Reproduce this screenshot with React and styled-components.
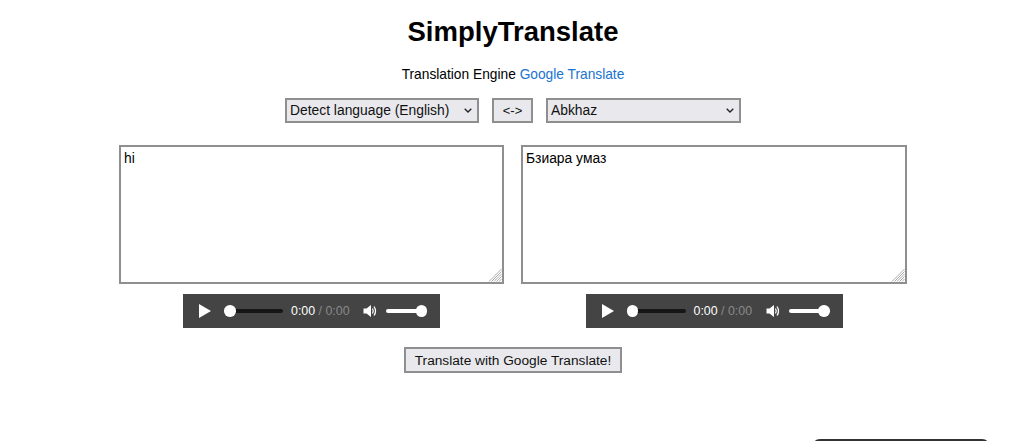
import React from 'react';
import styled, { createGlobalStyle } from 'styled-components';

const chevron =
  "data:image/svg+xml,%3Csvg xmlns='http://www.w3.org/2000/svg' width='8' height='5'%3E%3Cpath d='M.7.7 4 4l3.3-3.3' fill='none' stroke='%23222' stroke-width='1.3'/%3E%3C/svg%3E";

const GlobalStyle = createGlobalStyle`
  html, body {
    margin: 0;
    padding: 0;
    background: #fff;
    overflow: hidden;
  }
  body {
    font-family: "Liberation Sans", Arial, sans-serif;
    font-size: 13.7px;
    color: #000;
  }
`;

const Page = styled.main`
  height: 441px;
  display: flex;
  flex-direction: column;
  align-items: center;
  padding: 15px 0 0 2px;
  box-sizing: border-box;
`;

const Title = styled.h1`
  margin: 0;
  font-size: 27.5px;
  line-height: 33px;
  font-weight: 700;
`;

const EngineLine = styled.p`
  margin: 19px 0 0;
  font-size: 13.75px;
  line-height: 16px;

  a {
    color: #1a73d0;
    text-decoration: none;
  }
`;

const LanguageRow = styled.div`
  margin-top: 15px;
  display: flex;
  align-items: center;
  gap: 13px;
`;

const control = `
  box-sizing: border-box;
  height: 25px;
  background-color: #e9e9ed;
  border: 2px solid #8f8f8f;
  border-radius: 0;
  color: #111;
  font-family: "Liberation Sans", Arial, sans-serif;
  font-size: 13.7px;
`;

const LanguageSelect = styled.select`
  ${control}
  width: ${(p) => p.$width}px;
  padding: 0 0 1px 3px;
  font-size: 13.85px;
  appearance: none;
  background-image: url("${chevron}");
  background-repeat: no-repeat;
  background-position: right 5px center;
`;

const SwapButton = styled.button`
  ${control}
  width: 41px;
  padding: 0;
  font-size: 13px;
`;

const Panels = styled.div`
  margin-top: 22px;
  display: grid;
  grid-template-columns: 385px 386px;
  column-gap: 17px;
`;

const Panel = styled.div`
  display: flex;
  flex-direction: column;
  align-items: center;
  gap: 10px;
`;

const BoxWrap = styled.div`
  position: relative;
  width: 100%;
  height: 139px;
`;

const TextBox = styled.textarea`
  display: block;
  box-sizing: border-box;
  width: 100%;
  height: 100%;
  margin: 0;
  padding: 3px;
  border: 2px solid #8f8f8f;
  border-radius: 0;
  background: #fff;
  color: #000;
  font-family: "Liberation Sans", Arial, sans-serif;
  font-size: 13.85px;
  line-height: 16px;
  outline: none;
  resize: none;
`;

const Grip = styled.svg`
  position: absolute;
  right: 2px;
  bottom: 2px;
  width: 14px;
  height: 14px;
  stroke: #a0a0a0;
  stroke-width: 0.9;
  fill: none;
`;

const Player = styled.div`
  box-sizing: border-box;
  width: 257px;
  height: 34px;
  background: #444;
  display: flex;
  align-items: center;
  padding-left: 16px;
  color: #fff;
  font-size: 12.4px;
`;

const PlayIcon = styled.svg`
  width: 12px;
  height: 14px;
  fill: #fff;
  flex: none;
`;

const Track = styled.div`
  position: relative;
  height: 4px;
  width: ${(p) => p.$width}px;
  margin-left: ${(p) => p.$gap}px;
  border-radius: 2px;
  background: ${(p) => p.$color};
  flex: none;
`;

const Knob = styled.span`
  position: absolute;
  top: -4px;
  ${(p) => (p.$end ? 'right: -5px;' : 'left: -3px;')}
  width: 11.5px;
  height: 11.5px;
  border-radius: 50%;
  background: #fff;
`;

const Time = styled.span`
  margin-left: 8px;
  white-space: nowrap;
  flex: none;
  width: 62px;
`;

const Muted = styled.span`
  color: #8a8a8a;
`;

const VolumeIcon = styled.svg`
  width: 15px;
  height: 14px;
  margin-left: 10px;
  fill: #fff;
  stroke: #fff;
  flex: none;
`;

const TranslateButton = styled.button`
  ${control}
  margin-top: 19px;
  width: 218px;
  height: 26px;
  padding: 0;
`;

const CornerBar = styled.div`
  position: absolute;
  left: 812px;
  top: 439px;
  width: 178px;
  height: 20px;
  border-radius: 8px 8px 0 0;
  background: #333;
`;

function AudioPlayer() {
  return (
    <Player>
      <PlayIcon viewBox="0 0 12 14">
        <path d="M0 0 L12 7 L0 14 Z" />
      </PlayIcon>
      <Track $width={56} $gap={16} $color="#161616">
        <Knob />
      </Track>
      <Time>
        0:00 <Muted>/ 0:00</Muted>
      </Time>
      <VolumeIcon viewBox="0 0 15 14">
        <path d="M0.5 4.5 H3.5 L8 1 V13 L3.5 9.5 H0.5 Z" stroke="none" />
        <path d="M9.5 4.5 Q11 7 9.5 9.5 M11 2.5 Q14 7 11 11.5" fill="none" strokeWidth="1.3" />
      </VolumeIcon>
      <Track $width={36} $gap={8} $color="#fff">
        <Knob $end />
      </Track>
    </Player>
  );
}

function TextPanel({ value }) {
  return (
    <Panel>
      <BoxWrap>
        <TextBox defaultValue={value} />
        <Grip viewBox="0 0 14 14">
          <path d="M1 13.5 L13.5 1 M3.5 13.5 L13.5 3.5 M6 13.5 L13.5 6 M8.5 13.5 L13.5 8.5 M11 13.5 L13.5 11" />
        </Grip>
      </BoxWrap>
      <AudioPlayer />
    </Panel>
  );
}

export default function App() {
  return (
    <Page>
      <GlobalStyle />
      <Title>SimplyTranslate</Title>
      <EngineLine>
        Translation Engine <a href="#google">Google Translate</a>
      </EngineLine>
      <LanguageRow>
        <LanguageSelect $width={194} defaultValue="auto">
          <option value="auto">Detect language (English)</option>
          <option value="en">English</option>
        </LanguageSelect>
        <SwapButton>&lt;-&gt;</SwapButton>
        <LanguageSelect $width={195} defaultValue="ab">
          <option value="ab">Abkhaz</option>
          <option value="af">Afrikaans</option>
        </LanguageSelect>
      </LanguageRow>
      <Panels>
        <TextPanel value="hi" />
        <TextPanel value="Бзиара умаз" />
      </Panels>
      <TranslateButton>Translate with Google Translate!</TranslateButton>
      <CornerBar />
    </Page>
  );
}
